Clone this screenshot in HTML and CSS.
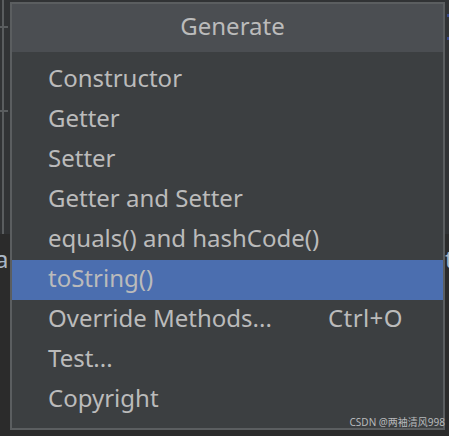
FILE: index.html
```html
<!DOCTYPE html>
<html>
<head>
<meta charset="utf-8">
<link rel="stylesheet" href="styles.css">
</head>
<body>
<div class="stage">
  <div class="bg-top"></div>
  <div class="bg-line v1"></div>
  <div class="bg-line h1"></div>
  <div class="bg-line h2"></div>
  <div class="bg-char left">a</div>
  <div class="bg-char right">t</div>
  <div class="bg-dot d1"></div>
  <div class="bg-dot d2"></div>
  <div class="popup">
    <div class="header">Generate</div>
    <ul class="list">
      <li class="row"><span class="name">Constructor</span></li>
      <li class="row"><span class="name">Getter</span></li>
      <li class="row"><span class="name">Setter</span></li>
      <li class="row"><span class="name">Getter and Setter</span></li>
      <li class="row"><span class="name">equals() and hashCode()</span></li>
      <li class="row selected"><span class="name">toString()</span></li>
      <li class="row"><span class="name">Override Methods...</span><span class="shortcut">Ctrl+O</span></li>
      <li class="row"><span class="name">Test...</span></li>
      <li class="row"><span class="name">Copyright</span></li>
    </ul>
  </div>
  <div class="watermark">CSDN @两袖清风998</div>
</div>
</body>
</html>
```

FILE: styles.css
```css
* { box-sizing: border-box; }
html, body { margin: 0; padding: 0; }
body {
  background: #2b2b2b;
  font-family: "Noto Sans", "Open Sans", sans-serif;
  overflow: hidden;
}
.stage {
  position: relative;
  width: 449px;
  height: 436px;
  background: #2b2b2b;
  overflow: hidden;
}
.bg-top {
  position: absolute;
  left: 0; top: 0;
  width: 449px; height: 234px;
  background: #313335;
}
.bg-line { position: absolute; background: #5a5d5f; }
.bg-line.v1 { left: 2px; top: 0; width: 2px; height: 234px; }
.bg-line.h1 { left: 0; top: 26px; width: 8px; height: 2px; }
.bg-line.h2 { left: 0; top: 110px; width: 8px; height: 2px; }
.bg-char {
  position: absolute;
  color: #a9b7c6;
  font-size: 24px;
  line-height: 28px;
  top: 245px;
}
.bg-char.left { left: -5px; }
.bg-char.right { left: 445px; }
.bg-dot { position: absolute; width: 2px; height: 3px; background: #3a4a8a; left: 447px; }
.bg-dot.d1 { top: 14px; }
.bg-dot.d2 { top: 37px; }
.popup {
  position: absolute;
  left: 10px;
  top: 2px;
  width: 435px;
  height: 428px;
  border: 2px solid #5b5e60;
  background: #3c3f41;
  display: flex;
  flex-direction: column;
}
.header {
  height: 48px;
  background: #4b4e52;
  color: #bbbbbb;
  font-size: 24px;
  line-height: 28px;
  display: flex;
  align-items: center;
  justify-content: center;
  padding-left: 10px;
  padding-bottom: 5px;
}
.list {
  list-style: none;
  margin: 0;
  padding: 8px 0;
}
.row {
  height: 40px;
  display: flex;
  align-items: center;
  padding-left: 36px;
  padding-bottom: 4px;
  color: #bbbbbb;
  font-size: 24px;
  line-height: 28px;
}
.row.selected { background: #4b6eaf; }
.name { flex: 0 0 280px; white-space: nowrap; }
.shortcut { white-space: nowrap; letter-spacing: 0.4px; }
.watermark {
  position: absolute;
  right: 4px;
  bottom: 7px;
  font-size: 10px;
  line-height: 13px;
  color: #b8babc;
  font-family: "Noto Sans", "Noto Sans CJK SC", sans-serif;
}
```
